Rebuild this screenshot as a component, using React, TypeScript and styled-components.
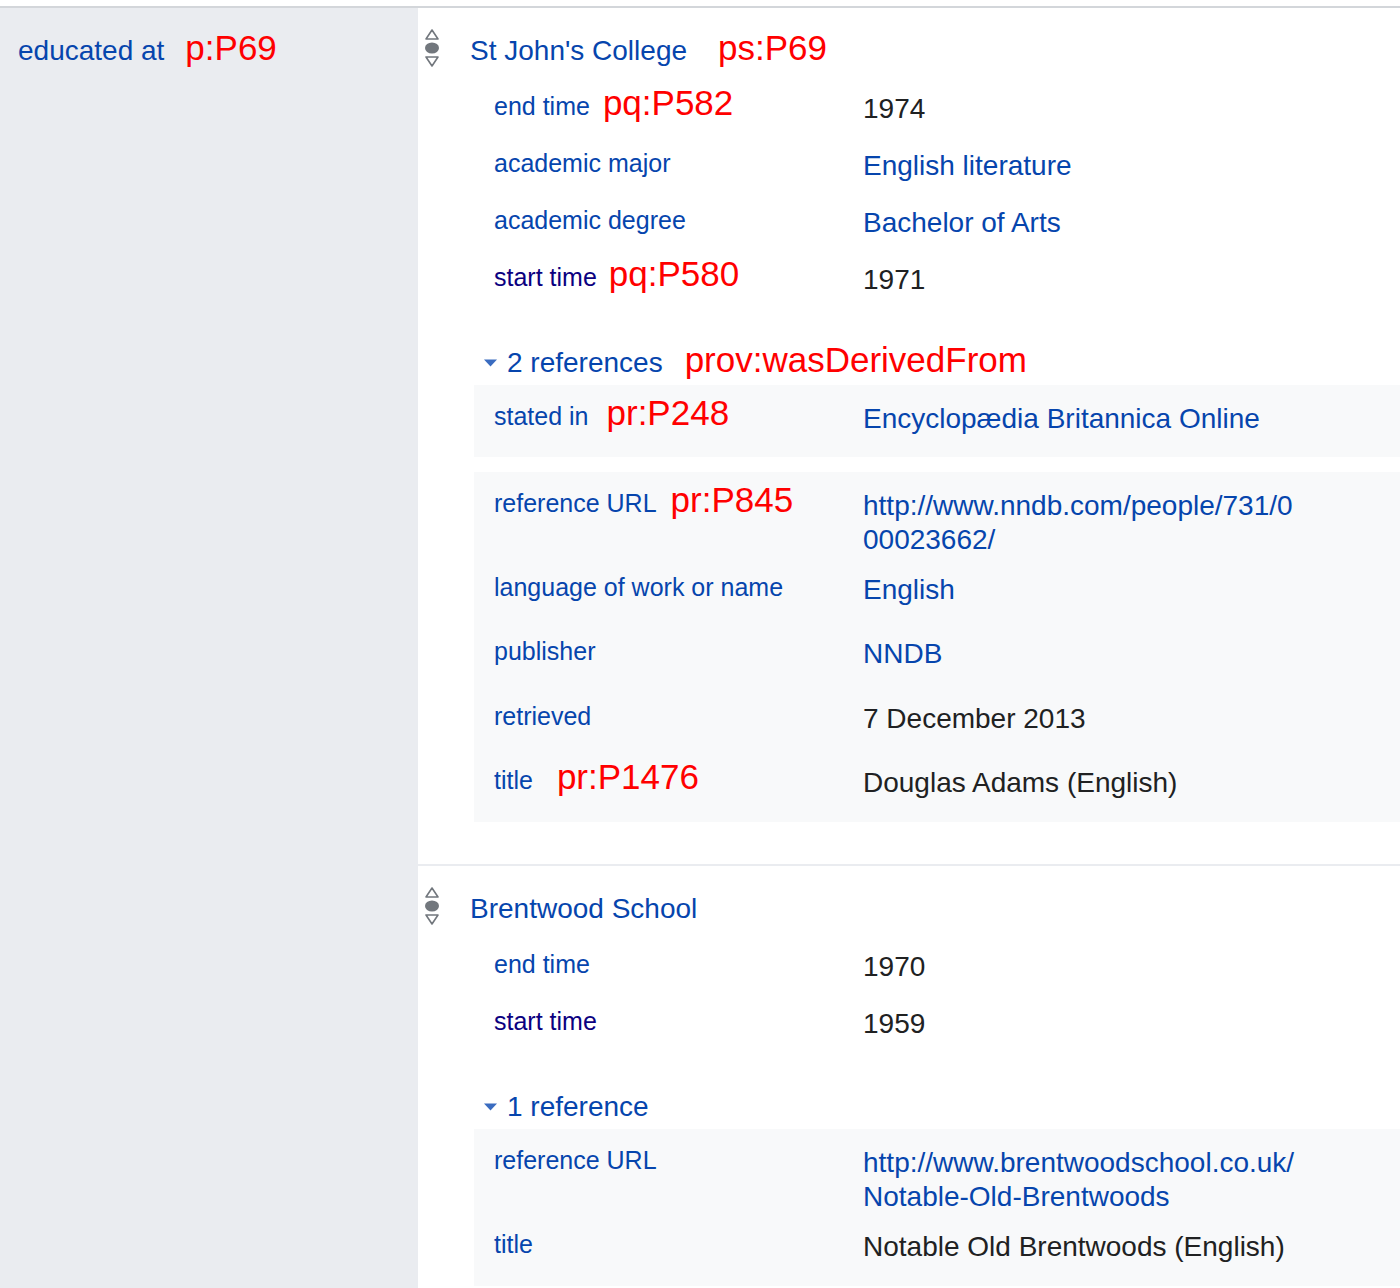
import React from "react";
import styled, { createGlobalStyle } from "styled-components";

const GlobalStyle = createGlobalStyle`
  html, body { margin: 0; padding: 0; background: #ffffff; }
  body { font-family: "Liberation Sans", Arial, sans-serif; }
  a { text-decoration: none; }
`;

const LINK = "#0645ad";
const VISITED = "#0b0080";
const TEXT = "#202122";

const Page = styled.div`
  box-sizing: border-box;
  min-height: 100vh;
  padding-top: 6px;
  display: flex;
  flex-direction: column;
`;

const Group = styled.div`
  flex: 1;
  display: flex;
  border-top: 2px solid #d3d6da;
`;

const PropertyCell = styled.div`
  box-sizing: border-box;
  width: 418px;
  flex: none;
  background: #eaecf0;
  padding: 26px 0 0 18px;
  font-size: 28px;
  line-height: 34px;
`;

const Link = styled.a<{ $visited?: boolean }>`
  color: ${(p) => (p.$visited ? VISITED : LINK)};
`;

const Note = styled.span<{ $gap: number }>`
  margin-left: ${(p) => p.$gap}px;
  color: #ff0000;
  font-size: 35px;
  line-height: 0;
`;

const StatementList = styled.div`
  flex: 1;
  display: flex;
  flex-direction: column;
`;

const Statement = styled.div<{ $last?: boolean }>`
  display: grid;
  grid-template-columns: 52px 1fr;
  padding: 20px 0 ${(p) => (p.$last ? 0 : 42)}px;
  border-bottom: ${(p) => (p.$last ? "none" : "2px solid #eaecf0")};
`;

const RankCell = styled.div`
  padding-left: 6px;
`;

const StatementBody = styled.div`
  display: flex;
  flex-direction: column;
`;

const MainValue = styled.div`
  margin-top: 6px;
  font-size: 28px;
  line-height: 34px;
`;

const Qualifiers = styled.div`
  margin: 22px 0 0 4px;
`;

const SnakRow = styled.div<{ $pb: number }>`
  display: flex;
  align-items: flex-start;
  padding-bottom: ${(p) => p.$pb}px;
`;

const SnakLabel = styled.div`
  box-sizing: border-box;
  width: 389px;
  flex: none;
  padding-left: 20px;
  font-size: 25px;
  line-height: 32px;
  white-space: nowrap;
`;

const SnakValue = styled.div<{ $url?: boolean }>`
  max-width: 440px;
  padding-top: 2px;
  font-size: 28px;
  line-height: 34px;
  color: ${TEXT};
  word-break: ${(p) => (p.$url ? "break-all" : "normal")};
`;

const References = styled.div`
  margin: 28px 0 0 4px;
  display: flex;
  flex-direction: column;
`;

const Toggler = styled.div`
  display: flex;
  align-items: center;
  gap: 10px;
  padding-left: 10px;
  margin-bottom: 5px;
`;

const TogglerText = styled.div`
  font-size: 28px;
  line-height: 34px;
  color: ${LINK};
`;

const RefBlock = styled.div`
  background: #f8f9fa;
  padding-top: 15px;
  & + & {
    margin-top: 15px;
  }
`;

type NoteT = { text: string; gap: number };
type SnakT = {
  label: string;
  note?: NoteT;
  visited?: boolean;
  value: string;
  link?: boolean;
  url?: boolean;
  pb: number;
};
type RefT = SnakT[];
type StatementT = {
  value: string;
  note?: NoteT;
  qualifiers: SnakT[];
  refsLabel: string;
  refsNote?: NoteT;
  refs: RefT[];
};

const statements: StatementT[] = [
  {
    value: "St John's College",
    note: { text: "ps:P69", gap: 31 },
    qualifiers: [
      { label: "end time", note: { text: "pq:P582", gap: 13 }, value: "1974", pb: 21 },
      { label: "academic major", value: "English literature", link: true, pb: 21 },
      { label: "academic degree", value: "Bachelor of Arts", link: true, pb: 21 },
      { label: "start time", visited: true, note: { text: "pq:P580", gap: 12 }, value: "1971", pb: 21 },
    ],
    refsLabel: "2 references",
    refsNote: { text: "prov:wasDerivedFrom", gap: 22 },
    refs: [
      [
        {
          label: "stated in",
          note: { text: "pr:P248", gap: 18 },
          value: "Encyclopædia Britannica Online",
          link: true,
          pb: 21,
        },
      ],
      [
        {
          label: "reference URL",
          note: { text: "pr:P845", gap: 14 },
          value: "http://www.nndb.com/people/731/000023662/",
          link: true,
          url: true,
          pb: 14,
        },
        { label: "language of work or name", value: "English", link: true, pb: 28 },
        { label: "publisher", value: "NNDB", link: true, pb: 29 },
        { label: "retrieved", value: "7 December 2013", pb: 28 },
        { label: "title", note: { text: "pr:P1476", gap: 24 }, value: "Douglas Adams (English)", pb: 22 },
      ],
    ],
  },
  {
    value: "Brentwood School",
    qualifiers: [
      { label: "end time", value: "1970", pb: 21 },
      { label: "start time", visited: true, value: "1959", pb: 21 },
    ],
    refsLabel: "1 reference",
    refs: [
      [
        {
          label: "reference URL",
          value: "http://www.brentwoodschool.co.uk/Notable-Old-Brentwoods",
          link: true,
          url: true,
          pb: 14,
        },
        { label: "title", value: "Notable Old Brentwoods (English)", pb: 22 },
      ],
    ],
  },
];

const RankIcon = () => (
  <svg width="16" height="40" viewBox="0 0 16 40" aria-hidden="true">
    <polygon
      points="2,11 8,2 14,11"
      fill="none"
      stroke="#72777d"
      strokeWidth="1.6"
      strokeLinejoin="round"
    />
    <ellipse cx="8" cy="20" rx="7" ry="5.6" fill="#72777d" />
    <polygon
      points="2,29 14,29 8,38"
      fill="none"
      stroke="#72777d"
      strokeWidth="1.6"
      strokeLinejoin="round"
    />
  </svg>
);

const ToggleArrow = () => (
  <svg width="13" height="8" viewBox="0 0 13 8" aria-hidden="true">
    <polygon points="0,0.5 13,0.5 6.5,7.5" fill="#3a6cc0" />
  </svg>
);

const NoteSpan = ({ note }: { note?: NoteT }) =>
  note ? <Note $gap={note.gap}>{note.text}</Note> : null;

const Snak = ({ s }: { s: SnakT }) => (
  <SnakRow $pb={s.pb}>
    <SnakLabel>
      <Link href="#" $visited={s.visited}>
        {s.label}
      </Link>
      <NoteSpan note={s.note} />
    </SnakLabel>
    <SnakValue $url={s.url}>
      {s.link ? <Link href="#">{s.value}</Link> : s.value}
    </SnakValue>
  </SnakRow>
);

export default function App() {
  return (
    <>
      <GlobalStyle />
      <Page>
        <Group>
          <PropertyCell>
            <Link href="#">educated at</Link>
            <NoteSpan note={{ text: "p:P69", gap: 21 }} />
          </PropertyCell>
          <StatementList>
            {statements.map((st, i) => (
              <Statement key={st.value} $last={i === statements.length - 1}>
                <RankCell>
                  <RankIcon />
                </RankCell>
                <StatementBody>
                  <MainValue>
                    <Link href="#">{st.value}</Link>
                    <NoteSpan note={st.note} />
                  </MainValue>
                  <Qualifiers>
                    {st.qualifiers.map((q) => (
                      <Snak key={q.label} s={q} />
                    ))}
                  </Qualifiers>
                  <References>
                    <Toggler>
                      <ToggleArrow />
                      <TogglerText>
                        {st.refsLabel}
                        <NoteSpan note={st.refsNote} />
                      </TogglerText>
                    </Toggler>
                    {st.refs.map((ref, ri) => (
                      <RefBlock key={ri}>
                        {ref.map((s) => (
                          <Snak key={s.label} s={s} />
                        ))}
                      </RefBlock>
                    ))}
                  </References>
                </StatementBody>
              </Statement>
            ))}
          </StatementList>
        </Group>
      </Page>
    </>
  );
}
